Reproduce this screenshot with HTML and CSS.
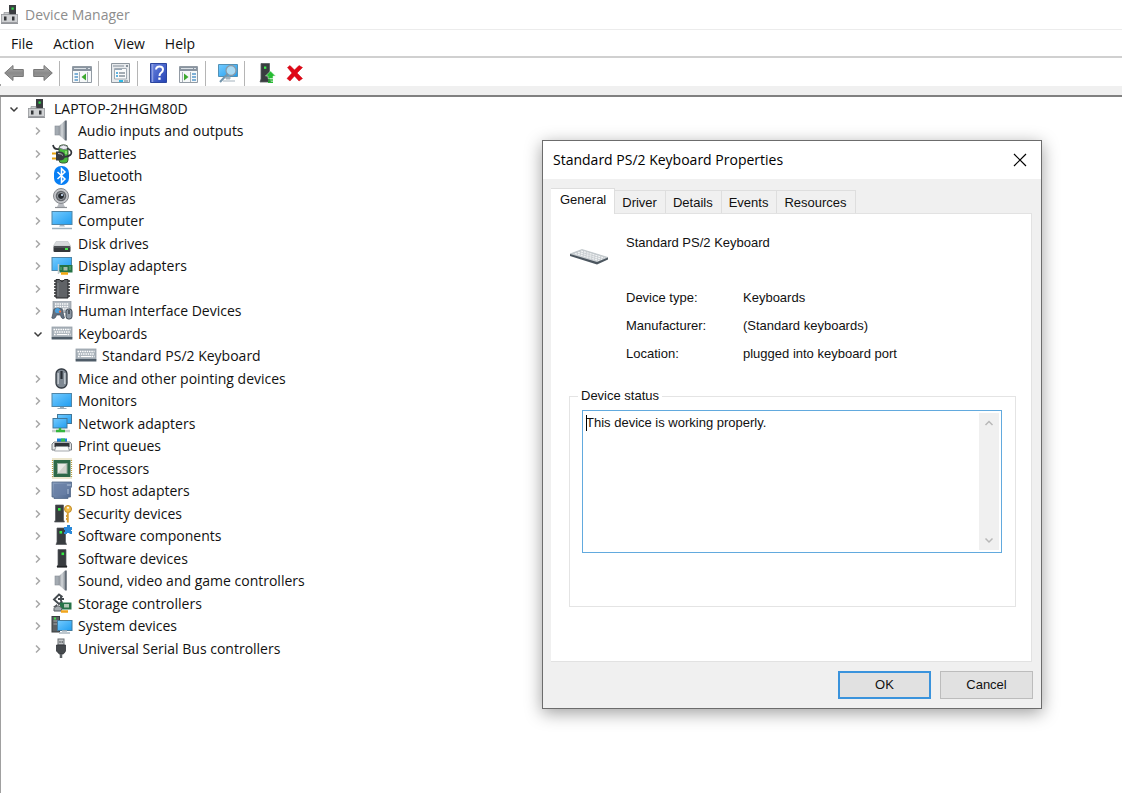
FILE: index.html
```html
<!DOCTYPE html>
<html lang="en">
<head>
<meta charset="utf-8">
<meta name="viewport" content="width=device-width, initial-scale=1">
<title>Device Manager</title>
<link rel="stylesheet" href="styles.css">
</head>
<body>
<svg class="sprite" aria-hidden="true">
  <defs>
    <linearGradient id="g-screen" x1="0" y1="0" x2="1" y2="1"><stop offset="0" stop-color="#74cbff"/><stop offset="1" stop-color="#1f9df0"/></linearGradient>
    <linearGradient id="g-metal" x1="0" y1="0" x2="1" y2="0"><stop offset="0" stop-color="#8c9299"/><stop offset=".5" stop-color="#d3d7da"/><stop offset="1" stop-color="#8d949b"/></linearGradient>
    <linearGradient id="g-arrow" x1="0" y1="0" x2="0" y2="1"><stop offset="0" stop-color="#b4b4b4"/><stop offset=".5" stop-color="#8a8a8a"/><stop offset="1" stop-color="#a2a2a2"/></linearGradient>
    <linearGradient id="g-sd" x1="0" y1="0" x2="1" y2="1"><stop offset="0" stop-color="#8ba0c0"/><stop offset="1" stop-color="#4d668f"/></linearGradient>
    <linearGradient id="g-help" x1="0" y1="0" x2="1" y2="1"><stop offset="0" stop-color="#6b85e0"/><stop offset="1" stop-color="#2443b4"/></linearGradient>
  </defs>
  <symbol id="i-root" viewBox="0 0 22 22">
    <rect x="9" y="1" width="7" height="11" fill="#3a3d40"/><rect x="11.500" y="3.500" width="2.200" height="2.200" fill="#2fe04a"/>
    <path d="M4 11V8.500H9V11" fill="#c9cbcd" stroke="#9a9da1" stroke-width=".8"/>
    <rect x="1.500" y="10.500" width="16" height="8" fill="#cfd1d3" stroke="#94979b" stroke-width=".8"/>
    <path d="M1 19.300H18" stroke="#777b80"/><rect x="4" y="12.500" width="2.500" height="4" fill="#34373a"/><rect x="12" y="12.500" width="2.500" height="4" fill="#34373a"/>
  </symbol>
  <symbol id="i-audio" viewBox="0 0 22 22">
    <rect x="4" y="6" width="4" height="9" fill="#a4abb2" stroke="#858c94" stroke-width=".6"/><path d="M8 6 14 .5V20.500L8 15z" fill="url(#g-metal)"/>
    <path d="M14 .5H15.800V20.500H14z" fill="#626b75"/>
  </symbol>
  <symbol id="i-battery" viewBox="0 0 22 22">
    <rect x="8" y="2" width="9" height="18" rx="3" fill="#47b93c" stroke="#3d5e37"/><path d="M8.500 5V3.500Q12.500 .5 16.500 3.500V6Q12.500 7.500 8.500 5" fill="#ececf4" stroke="#696b72" stroke-width=".8"/>
    <path d="M15 8V11" stroke="#9be582" stroke-width="1.500"/><path d="M2 2Q3 7 8 6M13 14Q22 13 20 8Q18 5 16 6" fill="none" stroke="#30353a" stroke-width="1.700"/>
    <path d="M1 10.500H6M1 15.500H6" stroke="#e8a20e" stroke-width="1.800"/><path d="M5 8.500H8Q14 8.500 14 13Q14 17.500 8 17.500H5z" fill="#373b40"/><path d="M7 10.500Q11 10.500 12 12.500" stroke="#b5b9bd" fill="none"/>
  </symbol>
  <symbol id="i-bluetooth" viewBox="0 0 22 22">
    <rect x="3" y="1" width="15" height="19" rx="7" fill="#087ff5"/><path d="M6.500 7 14 14 10.500 17.500V3.500L14 7 6.500 14" fill="none" stroke="#fff" stroke-width="1.500"/>
  </symbol>
  <symbol id="i-camera" viewBox="0 0 22 22">
    <path d="M6 19H14L12 15H8z" fill="#b9bcc1"/><path d="M4 19.500H16" stroke="#8d9196" stroke-width="1.200"/>
    <circle cx="10" cy="8" r="7.500" fill="#c3c5c9" stroke="#85888d"/><circle cx="10" cy="8" r="5.300" fill="#63676c"/><circle cx="10" cy="8" r="3.500" fill="#24282d" stroke="#9da2a8"/><circle cx="11" cy="7" r="1.100" fill="#cfe6ff"/>
  </symbol>
  <symbol id="i-computer" viewBox="0 0 22 22">
    <rect x="1" y="1.500" width="20" height="13" fill="url(#g-screen)" stroke="#4f86a8"/><path d="M9 15H13L14 16.500H8z" fill="#a9b5be"/><path d="M1 18.500H21" stroke="#9fb2bf" stroke-width="1.500"/>
  </symbol>
  <symbol id="i-monitor" viewBox="0 0 22 22">
    <rect x="1" y="3.500" width="19.500" height="13" fill="url(#g-screen)" stroke="#4f86a8"/><path d="M9 17H13V18H15.500V19H6.500V18H9z" fill="#9cadb9"/>
  </symbol>
  <symbol id="i-disk" viewBox="0 0 22 22">
    <path d="M5 8.500H17L19.500 13H2.500z" fill="#d7d9db" stroke="#c2c5c8" stroke-width=".7"/><rect x="2.500" y="13" width="17" height="6" rx="1" fill="#34373a"/><path d="M3 14H19" stroke="#666a6e"/><rect x="14" y="15" width="3" height="2" fill="#43e34b"/>
  </symbol>
  <symbol id="i-display" viewBox="0 0 22 22">
    <rect x="1" y="2.500" width="19.500" height="13" fill="url(#g-screen)" stroke="#4f86a8"/><path d="M7.500 9V19" stroke="#c7cdd0" stroke-width="1.500"/><rect x="8.500" y="10" width="13" height="7.500" fill="#257345"/><rect x="12.500" y="12" width="4" height="3.500" fill="#a6bba8"/><path d="M10 12V15M19 11V15" stroke="#65b37c"/><path d="M10 18.500H17" stroke="#f3a811" stroke-width="2.500"/>
  </symbol>
  <symbol id="i-firmware" viewBox="0 0 22 22">
    <path d="M3 3H19M3 6H19M3 9H19M3 12H19M3 15H19M3 18H19" stroke="#292b2e" stroke-width="1.600"/><path d="M5 1.500H8.500Q11 5.500 13.500 1.500H17V20H5z" fill="#606367" stroke="#26282b"/><path d="M7 5V18" stroke="#74787c" stroke-width="1.500"/>
  </symbol>
  <symbol id="i-keyboard" viewBox="0 0 22 22">
    <rect x="1" y="4" width="20" height="10" fill="#a9b2ba" stroke="#98a1aa" stroke-width=".8"/><path d="M2.500 6.500H19.500M3.500 9H19M3 11.500H5.500M16.500 11.500H19.500" stroke="#fff" stroke-width="1.300" stroke-dasharray="1.500 .8"/><path d="M6 11.500H16" stroke="#fff" stroke-width="1.200"/><rect x=".6" y="14" width="20.800" height="2.500" fill="#4f5c68"/>
  </symbol>
  <symbol id="i-hid" viewBox="0 0 22 22">
    <rect x="2" y="1.500" width="18" height="11" fill="#aeb6be" stroke="#929ba4" stroke-width=".7"/><path d="M4 4H18M4 6.500H18M12 9H18" stroke="#fff" stroke-width="1.300" stroke-dasharray="1.500 .8"/>
    <path d="M3 9Q7 7 11 9L13.500 18Q10.500 20 9.500 15H5.500Q4 20 .8 18z" fill="#637181" stroke="#414c58" stroke-width=".7"/><circle cx="6.500" cy="10.500" r="2.600" fill="#4b9fdb"/><circle cx="9" cy="11.500" r="1.100" fill="#ff7139"/><rect x="15" y="9" width="6" height="10" rx="2.500" fill="#8995a1" stroke="#404a54"/><path d="M18 10V14" stroke="#2f363d" stroke-width="1.300"/>
  </symbol>
  <symbol id="i-mouse" viewBox="0 0 22 22">
    <rect x="5" y="1" width="11" height="19" rx="5" fill="#7f8993" stroke="#353c44" stroke-width="1.300"/><path d="M7.200 5V16M13.800 5V16" stroke="#c0c7cd" stroke-width="1.500"/><path d="M10.500 3V11" stroke="#282e35" stroke-width="2.200"/>
  </symbol>
  <symbol id="i-network" viewBox="0 0 22 22">
    <rect x="6.500" y="1.500" width="14" height="9" fill="url(#g-screen)" stroke="#427799"/><rect x="2" y="5.500" width="14" height="9.500" fill="url(#g-screen)" stroke="#427799"/><path d="M1 18H19" stroke="#c8cecf" stroke-width="2.500"/><path d="M9 15V18M5 18H14" stroke="#35b63e" stroke-width="2.500"/>
  </symbol>
  <symbol id="i-print" viewBox="0 0 22 22">
    <path d="M6 3.500H16V8H6z" fill="#1580dc"/><path d="M10 3.500H14V8H10z" fill="#32be50"/><path d="M3 7H19L20.500 9V15H1V9z" fill="#e1e3e5" stroke="#7a7f84"/><path d="M3.500 8H18.500V12H3.500z" fill="#303338"/><path d="M5 11.500H17L18.500 16H3.500z" fill="#fafafa" stroke="#8f9499" stroke-width=".8"/>
  </symbol>
  <symbol id="i-cpu" viewBox="0 0 22 22">
    <rect x="1.500" y="1" width="19" height="19" fill="none" stroke="#b99f42" stroke-width="1.200" stroke-dasharray="1 1"/><rect x="2.500" y="2" width="17" height="17" fill="#2d6848"/><rect x="6.500" y="5.500" width="9.500" height="10" fill="#d1d3cd" stroke="#91aa9b"/><path d="M7 15V6H15z" fill="#e9e9e6"/>
  </symbol>
  <symbol id="i-sd" viewBox="0 0 22 22">
    <path d="M1 2H20.500V7L19.500 8V17H17V18.500H3V17H1z" fill="url(#g-sd)" stroke="#506787" stroke-width=".8"/><path d="M3 4H15V15H3z" fill="#687fa5" opacity=".7"/><path d="M17 4V6M19 4V6M17 9V14" stroke="#b7c7dd"/>
  </symbol>
  <symbol id="i-tower" viewBox="0 0 22 22">
    <path d="M7 1.500H15V16.500L16 19H6L7 16.500z" fill="#383c3f" stroke="#54585b" stroke-width=".7"/><rect x="10.500" y="4.500" width="2.600" height="2.600" fill="#35ed43"/><path d="M6 18.700H16" stroke="#222527" stroke-width="1.500"/>
  </symbol>
  <symbol id="i-security" viewBox="0 0 22 22">
    <path d="M4.500 2H12.500V17L13.500 19H3.500L4.500 17z" fill="#383c3f" stroke="#54585b" stroke-width=".7"/><rect x="7" y="5" width="2.600" height="2.600" fill="#35ed43"/><circle cx="17" cy="6" r="3.500" fill="#f1bd49" stroke="#c08a28"/><circle cx="17" cy="4.700" r="1" fill="#fff"/><path d="M16.800 9V19.500M15 13H17M15 16H17" stroke="#d99f35" stroke-width="1.900"/>
  </symbol>
  <symbol id="i-component" viewBox="0 0 22 22">
    <path d="M6 3H14.500V17L15.500 19.500H5L6 17z" fill="#383c3f" stroke="#54585b" stroke-width=".7"/><rect x="8.500" y="6" width="2.600" height="2.600" fill="#35ed43"/><path d="M13 2H16V0H19V2H21V5H20V6H21V9H18.500V8H16V9H13V7H14V5H13z" fill="#2a89d9"/>
  </symbol>
  <symbol id="i-storage" viewBox="0 0 22 22">
    <path d="M11.500 4 8 1.500 3 6.500 8 11 11.500 8.500M7 6H13M10 3.500V8.500" fill="none" stroke="#454b50" stroke-width="1.900"/><path d="M2 14 6 11V15z" fill="#505459"/><path d="M9 9.500H20.500V16.500H9z" fill="#277348"/><rect x="13" y="11" width="5" height="3.500" fill="#b1c7b5"/><path d="M3 15.500Q7 10 11 15.500L10 18H3z" fill="#a6acb0" stroke="#555b60"/><path d="M10 18.500H17" stroke="#f1a51c" stroke-width="2.500"/>
  </symbol>
  <symbol id="i-system" viewBox="0 0 22 22">
    <rect x="1" y="1.500" width="7.500" height="15.500" fill="#5c6063" stroke="#383c3f"/><path d="M2.500 6H7M2.500 9H6" stroke="#a5a9ad"/><rect x="3" y="2.500" width="2" height="2" fill="#3fe44b"/><rect x="6.500" y="5.500" width="14.500" height="10" fill="url(#g-screen)" stroke="#427b9d"/><path d="M11 16H16M8 18H19" stroke="#a8b5be" stroke-width="1.300"/>
  </symbol>
  <symbol id="i-usb" viewBox="0 0 22 22">
    <rect x="7" y="1" width="6" height="6" fill="#c2c5c7" stroke="#6b7074"/><path d="M8.500 4H9.500M10.700 4H11.700" stroke="#303438" stroke-width="1.500"/><path d="M5.500 7H14.500V13Q13 16 12 16H8.500Q7 15 5.500 13z" fill="#45494d" stroke="#303438" stroke-width=".8"/><path d="M10 16V20" stroke="#5b6064" stroke-width="2.500"/>
  </symbol>
  <symbol id="i-chevron" viewBox="0 0 12 12"><path d="M4 2.500 7.500 6 4 9.500" fill="none" stroke="currentColor" stroke-width="1.500"/></symbol>
  <symbol id="i-chevron-down" viewBox="0 0 12 12"><path d="M2.500 4.500 6 8 9.500 4.500" fill="none" stroke="currentColor" stroke-width="1.500"/></symbol>
  <symbol id="i-chevron-up" viewBox="0 0 12 12"><path d="M2.500 8 6 4.500 9.500 8" fill="none" stroke="currentColor" stroke-width="1.500"/></symbol>
</svg>

<header class="titlebar"><svg class="icon"><use href="#i-root"/></svg><h1>Device Manager</h1></header>
<nav class="menubar" aria-label="Main menu"><button>File</button><button>Action</button><button>View</button><button>Help</button></nav>
<div class="toolbar" role="toolbar" aria-label="Tools">
  <button aria-label="Back"><svg viewBox="0 0 20 22"><path d="M.7 11 9 3.500V7.500H19.300V14.500H9V18.500z" fill="url(#g-arrow)" stroke="#777" stroke-linejoin="round"/></svg></button>
  <button aria-label="Forward"><svg viewBox="0 0 20 22"><path d="M19.300 11 11 3.500V7.500H.7V14.500H11V18.500z" fill="url(#g-arrow)" stroke="#777" stroke-linejoin="round"/></svg></button>
  <span class="separator"></span>
  <button aria-label="Show console tree"><svg viewBox="0 0 20 22"><path d="M.5 4.500H19.500V20.500H.5z" fill="#f6f8f9" stroke="#929ba4"/><path d="M1 5H19V9H1z" fill="#8994a0"/><path d="M2 6.500H14M16 6.500H18" stroke="#dce2e7"/><path d="M7.500 10V20M15.500 10V20" stroke="#a6afb7"/><path d="M2.500 12H6M2.500 15H6M2.500 18H6" stroke="#5798ca" stroke-width="1.300"/><path d="M14 11.500V18.500L9.500 15z" fill="#3ca92e"/></svg></button>
  <span class="separator"></span>
  <button aria-label="Properties"><svg viewBox="0 0 20 22"><path d="M.5 1.500H18.500V20.500H.5z" fill="#e7eaed" stroke="#8e979f"/><path d="M2 4H13" stroke="#a4adb5" stroke-width="1.500"/><path d="M15 4H17" stroke="#66717b" stroke-width="1.500"/><path d="M3.500 6.500H15.500V17H3.500z" fill="#fafbfc" stroke="#a2abb4"/><path d="M4 7.500H11" stroke="#98a7b5"/><path d="M5 11H7M5 14H7" stroke="#2c9cd8" stroke-width="1.500"/><path d="M8 11H14M8 14H14" stroke="#87929c" stroke-width="1.300"/><path d="M8 19H12" stroke="#2bb9e5" stroke-width="2"/><path d="M13 19H17" stroke="#abb3ba" stroke-width="2"/></svg></button>
  <span class="separator"></span>
  <button aria-label="Help"><svg viewBox="0 0 20 22"><path d="M.5 1.500H16.500V20.500H.5z" fill="url(#g-help)" stroke="#2c469f"/><path d="M2.500 2V20" stroke="#8d9fe1" stroke-width="1.500"/><path d="M6 7.500Q6.300 4.500 9.500 4.500Q13 4.500 13 7.500Q13 9.500 10.800 11Q9.500 12 9.500 14" fill="none" stroke="#fff" stroke-width="2"/><rect x="8.300" y="15.500" width="2.300" height="2.300" fill="#fff"/></svg></button>
  <button aria-label="Show action pane"><svg viewBox="0 0 20 22"><path d="M.5 4.500H18.500V20.500H.5z" fill="#f6f8f9" stroke="#929ba4"/><path d="M1 5H18V9H1z" fill="#8994a0"/><path d="M2 6.500H14M15 6.500H17" stroke="#dce2e7"/><path d="M3.500 10V20M11.500 10V20" stroke="#a6afb7"/><path d="M13 12H17M13 15H17M13 18H17" stroke="#5798ca" stroke-width="1.300"/><path d="M5 11.500V18.500L9.500 15z" fill="#3ca92e"/></svg></button>
  <span class="separator"></span>
  <button aria-label="Scan for hardware changes"><svg viewBox="0 0 20 22"><path d="M.5 2.500H19.500V14.500H.5z" fill="url(#g-screen)" stroke="#5391b5"/><path d="M8 15H12V17H8zM5 19H17" fill="#a3b2bd" stroke="#a3b2bd"/><circle cx="13" cy="8.500" r="5" fill="#a9daf4" stroke="#899ba9" stroke-width="1.300"/><path d="M9.500 12 2 20" stroke="#7395ac" stroke-width="2"/></svg></button>
  <span class="separator"></span>
  <button aria-label="Update driver"><svg viewBox="0 0 20 22"><path d="M4 1.500H12.500V17L13.500 20H3L4 17z" fill="#393d40" stroke="#565a5e" stroke-width=".8"/><rect x="7" y="4.500" width="2.300" height="2.300" fill="#3df24d"/><path d="M13.500 9 18.500 14H16V16.500H11V14H8.500z" fill="#25bb31" stroke="#e2f5e3" stroke-width=".5"/><path d="M11 18H16M11 20.300H16" stroke="#25bb31" stroke-width="1.400"/></svg></button>
  <button aria-label="Uninstall device"><svg viewBox="0 0 20 22"><path d="M1.500 5.500 4 3.500 8.500 8 13 3.500 16.500 5.500 11 11 16.500 16.500 13 19 8.500 14 4 19 1 16.500 6 11z" fill="#df0716" stroke="#c8000d" stroke-width=".5"/></svg></button>
</div>

<main class="workspace">
<ul class="tree" role="tree" aria-label="Devices">
  <li class="root open" role="treeitem" aria-level="1" aria-expanded="true"><svg class="twisty"><use href="#i-chevron-down"/></svg><svg class="icon"><use href="#i-root"/></svg>LAPTOP-2HHGM80D</li>
  <li role="treeitem" aria-level="2"><svg class="twisty"><use href="#i-chevron"/></svg><svg class="icon"><use href="#i-audio"/></svg>Audio inputs and outputs</li>
  <li role="treeitem" aria-level="2"><svg class="twisty"><use href="#i-chevron"/></svg><svg class="icon"><use href="#i-battery"/></svg>Batteries</li>
  <li role="treeitem" aria-level="2"><svg class="twisty"><use href="#i-chevron"/></svg><svg class="icon"><use href="#i-bluetooth"/></svg>Bluetooth</li>
  <li role="treeitem" aria-level="2"><svg class="twisty"><use href="#i-chevron"/></svg><svg class="icon"><use href="#i-camera"/></svg>Cameras</li>
  <li role="treeitem" aria-level="2"><svg class="twisty"><use href="#i-chevron"/></svg><svg class="icon"><use href="#i-computer"/></svg>Computer</li>
  <li role="treeitem" aria-level="2"><svg class="twisty"><use href="#i-chevron"/></svg><svg class="icon"><use href="#i-disk"/></svg>Disk drives</li>
  <li role="treeitem" aria-level="2"><svg class="twisty"><use href="#i-chevron"/></svg><svg class="icon"><use href="#i-display"/></svg>Display adapters</li>
  <li role="treeitem" aria-level="2"><svg class="twisty"><use href="#i-chevron"/></svg><svg class="icon"><use href="#i-firmware"/></svg>Firmware</li>
  <li role="treeitem" aria-level="2"><svg class="twisty"><use href="#i-chevron"/></svg><svg class="icon"><use href="#i-hid"/></svg>Human Interface Devices</li>
  <li class="open" role="treeitem" aria-level="2" aria-expanded="true"><svg class="twisty"><use href="#i-chevron-down"/></svg><svg class="icon"><use href="#i-keyboard"/></svg>Keyboards</li>
  <li class="leaf" role="treeitem" aria-level="3"><svg class="icon"><use href="#i-keyboard"/></svg>Standard PS/2 Keyboard</li>
  <li role="treeitem" aria-level="2"><svg class="twisty"><use href="#i-chevron"/></svg><svg class="icon"><use href="#i-mouse"/></svg>Mice and other pointing devices</li>
  <li role="treeitem" aria-level="2"><svg class="twisty"><use href="#i-chevron"/></svg><svg class="icon"><use href="#i-monitor"/></svg>Monitors</li>
  <li role="treeitem" aria-level="2"><svg class="twisty"><use href="#i-chevron"/></svg><svg class="icon"><use href="#i-network"/></svg>Network adapters</li>
  <li role="treeitem" aria-level="2"><svg class="twisty"><use href="#i-chevron"/></svg><svg class="icon"><use href="#i-print"/></svg>Print queues</li>
  <li role="treeitem" aria-level="2"><svg class="twisty"><use href="#i-chevron"/></svg><svg class="icon"><use href="#i-cpu"/></svg>Processors</li>
  <li role="treeitem" aria-level="2"><svg class="twisty"><use href="#i-chevron"/></svg><svg class="icon"><use href="#i-sd"/></svg>SD host adapters</li>
  <li role="treeitem" aria-level="2"><svg class="twisty"><use href="#i-chevron"/></svg><svg class="icon"><use href="#i-security"/></svg>Security devices</li>
  <li role="treeitem" aria-level="2"><svg class="twisty"><use href="#i-chevron"/></svg><svg class="icon"><use href="#i-component"/></svg>Software components</li>
  <li role="treeitem" aria-level="2"><svg class="twisty"><use href="#i-chevron"/></svg><svg class="icon"><use href="#i-tower"/></svg>Software devices</li>
  <li role="treeitem" aria-level="2"><svg class="twisty"><use href="#i-chevron"/></svg><svg class="icon"><use href="#i-audio"/></svg>Sound, video and game controllers</li>
  <li role="treeitem" aria-level="2"><svg class="twisty"><use href="#i-chevron"/></svg><svg class="icon"><use href="#i-storage"/></svg>Storage controllers</li>
  <li role="treeitem" aria-level="2"><svg class="twisty"><use href="#i-chevron"/></svg><svg class="icon"><use href="#i-system"/></svg>System devices</li>
  <li role="treeitem" aria-level="2"><svg class="twisty"><use href="#i-chevron"/></svg><svg class="icon"><use href="#i-usb"/></svg>Universal Serial Bus controllers</li>
</ul>
</main>

<section class="dialog" role="dialog" aria-labelledby="dialog-title">
  <header class="dialog-title">
    <h2 id="dialog-title">Standard PS/2 Keyboard Properties</h2>
    <button class="close" aria-label="Close"><svg viewBox="0 0 14 14"><path d="M1 1 13 13M13 1 1 13" stroke="#000" stroke-width="1.200"/></svg></button>
  </header>
  <div class="tabs" role="tablist">
    <button role="tab" aria-selected="true">General</button><button role="tab">Driver</button><button role="tab">Details</button><button role="tab">Events</button><button role="tab">Resources</button>
  </div>
  <div class="panel" role="tabpanel">
    <div class="device">
      <svg viewBox="0 0 40 20" aria-hidden="true"><path d="M1 7 13 2.500 39 10.500 28 16z" fill="#c8cdd1" stroke="#b5bbc0" stroke-width=".7"/><path d="M1 7 28 15 39 10.500V12.500L28 17.500 1 9z" fill="#4c565f"/><path d="M6 6.500 30 13.500M9 5.300 33 12.300M12 4 35.500 11" stroke="#f1f3f4" stroke-width="1.200" stroke-dasharray="2 1"/></svg>
      <strong>Standard PS/2 Keyboard</strong>
    </div>
    <dl class="facts">
      <dt>Device type:</dt><dd>Keyboards</dd>
      <dt>Manufacturer:</dt><dd>(Standard keyboards)</dd>
      <dt>Location:</dt><dd>plugged into keyboard port</dd>
    </dl>
    <fieldset class="status">
      <legend><label for="status-text">Device status</label></legend>
      <div class="status-box">
        <textarea id="status-text" readonly>This device is working properly.</textarea>
        <span class="caret"></span>
        <div class="scrollbar"><button aria-label="Scroll up"><svg><use href="#i-chevron-up"/></svg></button><button aria-label="Scroll down"><svg><use href="#i-chevron-down"/></svg></button></div>
      </div>
    </fieldset>
  </div>
  <footer class="actions"><button class="default">OK</button><button>Cancel</button></footer>
</section>
</body>
</html>
```
FILE: styles.css
```css
* { box-sizing: border-box; }
body {
  margin: 0;
  min-height: 100vh;
  display: flex;
  flex-direction: column;
  position: relative;
  background: #fff;
  color: #111;
  font: 14px/22px "Open Sans", "Noto Sans", sans-serif;
}
h1, h2, ul, dl, dd { margin: 0; padding: 0; font-weight: 400; }
button { padding: 0; border: 0; background: none; color: inherit; font: inherit; }
svg { display: block; flex: none; }
.sprite { position: absolute; width: 0; height: 0; }
.icon { width: 22px; height: 22px; }

.titlebar { display: flex; align-items: center; gap: 3px; height: 30px; border-bottom: 1px solid #ececec; }
.titlebar h1 { font-size: 14px; color: #8d8d8d; }
.menubar { display: flex; gap: 20px; height: 28px; padding: 2px 11px 0; border-bottom: 2px solid #d0d0d0; }

.toolbar { display: flex; align-items: center; height: 28px; padding: 2px 0 0 4px; }
.toolbar svg { width: 20px; height: 22px; }
.toolbar button + button { margin-left: 9px; }
.separator { width: 1px; height: 25px; margin: 0 12px 0 6px; background: #b5b5b5; }

.workspace { flex: 1; border-left: 1px solid #a0a0a0; }
.workspace::before { content: ""; display: block; height: 11px; margin-left: -1px; background: #f0f0f0; border-bottom: 2px solid #808080; }
.toolbar + .workspace::before { height: 11px; }
.tree { list-style: none; }
.tree li { display: flex; align-items: center; height: 22px; padding-left: 31px; white-space: nowrap; }
.tree li:nth-child(odd) { height: 23px; }
.tree .twisty { width: 12px; height: 12px; margin-right: 7px; color: #a8a8a8; }
.tree .icon { margin-right: 5px; }
.tree .open .twisty { color: #3c3c3c; }
.tree .root { padding-left: 7px; }
.tree .leaf { padding-left: 74px; }
.workspace::before, .toolbar + .workspace::before { height: 9px; margin-top: 2px; }
.workspace { margin-top: -2px; }

.dialog {
  position: absolute;
  left: 542px;
  top: 140px;
  width: 500px;
  padding: 0 9px 9px 8px;
  background: #f0f0f0;
  border: 1px solid #6c6c6c;
  box-shadow: 0 4px 16px rgba(0, 0, 0, .38);
  font: 13px/18px "Liberation Sans", Arial, sans-serif;
}
.dialog-title { display: flex; justify-content: space-between; align-items: center; height: 38px; margin: 0 -9px 0 -8px; padding: 0 14px 0 10px; background: #fff; }
.dialog-title h2 { font: 14px/22px "Open Sans", "Noto Sans", sans-serif; color: #000; }
.close svg { width: 14px; height: 14px; }
.tabs { display: flex; align-items: flex-end; margin-top: 9px; }
.tabs button { height: 23px; padding: 1px 8px 0 7px; border: 1px solid #dedede; border-width: 1px 1px 0 0; }
.tabs [aria-selected="true"] { height: 26px; margin-bottom: -1px; padding: 0 8px 3px 9px; background: #fff; position: relative; }
.panel { padding: 20px 15px 54px 18px; background: #fff; border: 1px solid #e2e2e2; border-left: 0; }
.device { display: flex; gap: 17px; height: 55px; }
.device svg { width: 40px; height: 20px; margin-top: 13px; }
.device strong { font-weight: 400; }
.facts { display: grid; grid-template-columns: 117px 1fr; row-gap: 10px; margin-left: 57px; }
.status { margin: 24px 0 0; padding: 5px 13px 53px 12px; border: 1px solid #e4e4e4; }
.status legend { margin-left: -4px; padding: 0 3px; }
.status-box { position: relative; display: flex; height: 143px; border: 1px solid #62aade; padding: 2px; }
.status-box textarea { flex: 1; min-width: 0; padding: 1px; border: 0; outline: 0; resize: none; overflow: hidden; background: none; color: inherit; font: inherit; }
.caret { position: absolute; left: 3px; top: 4px; width: 1px; height: 16px; background: #000; }
.scrollbar { display: flex; flex-direction: column; justify-content: space-between; align-items: center; width: 20px; padding: 4px 0; background: #f0f0f0; color: #b8b8b8; }
.scrollbar svg { width: 12px; height: 12px; }
.actions { display: flex; justify-content: flex-end; gap: 9px; margin: 9px -1px 0 0; }
.actions button { width: 93px; height: 28px; border: 1px solid #bcbcbc; background: #e1e1e1; }
.actions .default { border: 2px solid #3a93dc; }
```
